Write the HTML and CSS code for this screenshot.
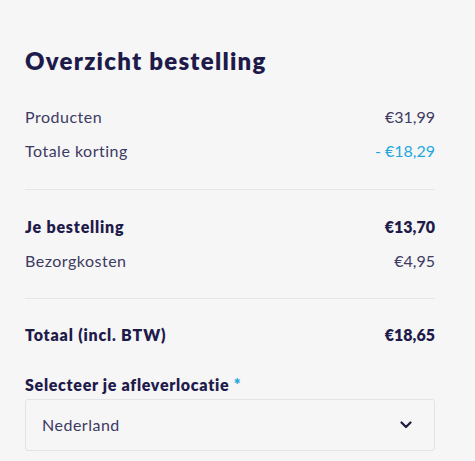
FILE: index.html
```html
<!DOCTYPE html>
<html lang="nl">
<head>
<meta charset="utf-8">
<title>Overzicht bestelling</title>
<link rel="stylesheet" href="styles.css">
</head>
<body>
<div class="summary">
  <h2 class="title">Overzicht bestelling</h2>
  <div class="section first">
    <div class="row"><span class="name">Producten</span><span>€31,99</span></div>
    <div class="row"><span class="name">Totale korting</span><span class="discount">- €18,29</span></div>
  </div>
  <div class="section second">
    <div class="row strong"><span class="name">Je bestelling</span><span>€13,70</span></div>
    <div class="row"><span class="name">Bezorgkosten</span><span>€4,95</span></div>
  </div>
  <div class="section third">
    <div class="row strong"><span class="name">Totaal (incl. BTW)</span><span>€18,65</span></div>
  </div>
  <div class="field">
    <label class="label" for="loc">Selecteer je afleverlocatie <span class="req">*</span></label>
    <div class="select" id="loc">
      <span class="name">Nederland</span>
      <svg class="chev" width="12" height="8" viewBox="0 0 12 8" aria-hidden="true"><path d="M1.5 1.5 L6 6 L10.5 1.5" fill="none" stroke="#1e1b3f" stroke-width="2.2" stroke-linecap="round" stroke-linejoin="round"/></svg>
    </div>
  </div>
</div>
</body>
</html>
```
FILE: styles.css
```css
* { box-sizing: border-box; }
html, body { margin: 0; padding: 0; }
body {
  background: #f6f6f6;
  font-family: Lato, "Noto Sans", sans-serif;
  color: #3d3a63;
  font-size: 16px;
}
.summary {
  padding: 47px 40px 0 25px;
}
.title {
  margin: 0;
  font-size: 24px;
  line-height: 1.2;
  font-weight: 800;
  letter-spacing: 1.25px;
  color: #1e1b4b;
}
.section {
  display: flex;
  flex-direction: column;
  gap: 10px;
  padding: 25px 0 25px;
  border-top: 1px solid #e6e6e8;
}
.section.first {
  border-top: none;
  padding-top: 29px;
  padding-bottom: 26px;
}
.section.third {
  padding-top: 24px;
  padding-bottom: 26px;
}
.row {
  display: flex;
  justify-content: space-between;
  line-height: 24px;
}
.row .name { letter-spacing: 0.5px; }
.row.strong {
  font-weight: 800;
  color: #1e1b4b;
}
.row.strong .name { letter-spacing: 0.8px; }
.discount { color: #1fa8e0; }
.label {
  display: block;
  font-weight: 800;
  letter-spacing: 0.7px;
  color: #1e1b4b;
  line-height: 24px;
  margin-bottom: 2px;
}
.req { color: #1fa8e0; }
.select {
  height: 52px;
  border: 1px solid #e3e3e6;
  border-radius: 3px;
  background: #f6f6f6;
  display: flex;
  align-items: center;
  justify-content: space-between;
  padding: 0 22px 0 16px;
  color: #3d3a63;
}
.select .name { letter-spacing: 0.5px; }
.chev { display: block; }
```
